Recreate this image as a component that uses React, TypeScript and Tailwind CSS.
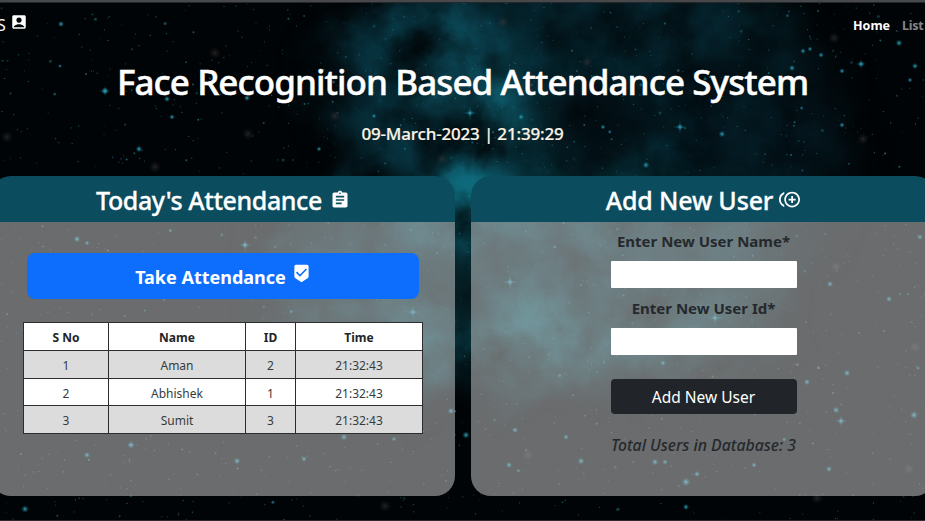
import type { ReactNode } from "react";
import { MdAccountBox, MdAssignment, MdBeenhere, MdControlPointDuplicate } from "react-icons/md";

type Star = { x: number; y: number; r: number; o: number; c: string };

function makeStars(count: number): Star[] {
  let seed = 48271;
  const next = () => {
    seed = (seed * 16807) % 2147483647;
    return seed / 2147483647;
  };
  return Array.from({ length: count }, () => {
    const size = next();
    return {
      x: next() * 925,
      y: next() * 521,
      r: size > 0.97 ? 1.5 : size > 0.8 ? 1 : 0.65,
      o: 0.25 + next() * 0.5,
      c: next() > 0.85 ? "#54717a" : "#26798d",
    };
  });
}

const stars = makeStars(1600);

const brightStars = [
  [61, 24, 2], [60, 66, 1.3], [105, 91, 2.2], [167, 99, 2], [172, 117, 1.8], [139, 149, 2.2], [247, 98, 2],
  [319, 149, 1.6], [374, 116, 1.6], [521, 117, 2], [722, 134, 2.2], [646, 165, 2.2], [603, 127, 1.6],
  [803, 51, 1.8], [810, 49, 1.6], [821, 55, 1.8], [792, 68, 2], [899, 43, 2.2], [842, 71, 1.8], [915, 66, 2],
  [910, 80, 1.6], [842, 125, 1.8], [77, 239, 2.2], [87, 243, 1.6], [25, 509, 2.4], [87, 455, 2], [237, 461, 2.2],
  [304, 459, 1.8], [344, 437, 2.2], [394, 439, 1.6], [451, 411, 2.2], [466, 435, 2.4], [581, 461, 2.2],
  [509, 465, 2], [566, 437, 1.8], [515, 430, 2], [655, 462, 2.2], [665, 462, 1.8], [686, 482, 2.8],
  [697, 474, 2], [754, 465, 1.8], [836, 410, 2.2], [847, 373, 2.2], [807, 382, 2], [829, 469, 2],
  [914, 415, 2.6], [889, 299, 2], [920, 237, 1.8], [830, 284, 2], [686, 507, 2], [663, 363, 1.8],
];

const flares = [
  [470, 113, 9], [680, 127, 9], [105, 91, 7], [715, 318, 11], [510, 282, 11], [413, 312, 9],
  [861, 64, 6], [245, 245, 8], [841, 421, 8], [131, 445, 6],
];

const dust = [
  [215, 53], [7, 137], [248, 134], [335, 116], [503, 22], [442, 159], [863, 139], [834, 38], [155, 167],
  [836, 267], [915, 347], [528, 455], [909, 469], [385, 506], [587, 62], [817, 498],
];

function SpaceBackdrop() {
  return (
    <svg className="absolute inset-0" width="925" height="521" viewBox="0 0 925 521" aria-hidden="true">
      <defs>
        <filter id="cloud" x="-60" y="-80" width="1045" height="681" filterUnits="userSpaceOnUse" colorInterpolationFilters="sRGB">
          <feGaussianBlur in="SourceGraphic" stdDeviation="20" result="soft" />
          <feTurbulence type="fractalNoise" baseFrequency="0.018" numOctaves="5" seed="14" result="noise" />
          <feDisplacementMap in="soft" in2="noise" scale="60" xChannelSelector="R" yChannelSelector="G" result="warped" />
          <feColorMatrix in="noise" type="matrix" values="0 0 0 0 0  0 0 0 0 0  0 0 0 0 0  1.3 0 0.9 0 -0.4" result="mask" />
          <feComposite in="warped" in2="mask" operator="in" />
        </filter>
        <radialGradient id="glow">
          <stop offset="0" stopColor="#3bb4cc" />
          <stop offset="0.4" stopColor="#1f8196" stopOpacity="0.6" />
          <stop offset="1" stopColor="#0e6176" stopOpacity="0" />
        </radialGradient>
        <radialGradient id="dust">
          <stop offset="0" stopColor="#4c4646" stopOpacity="0.45" />
          <stop offset="1" stopColor="#2a2525" stopOpacity="0" />
        </radialGradient>
      </defs>
      <rect width="925" height="521" fill="#010406" />
      <g filter="url(#cloud)">
        <ellipse cx="570" cy="85" rx="250" ry="135" fill="#052630" />
        <ellipse cx="430" cy="50" rx="55" ry="75" fill="#083b48" opacity="0.9" />
        <ellipse cx="462" cy="75" rx="40" ry="60" fill="#0c4b5a" opacity="0.9" />
        <ellipse cx="512" cy="110" rx="28" ry="50" fill="#11687a" opacity="0.9" />
        <ellipse cx="400" cy="145" rx="32" ry="60" fill="#07333f" opacity="0.9" />
        <ellipse cx="765" cy="150" rx="80" ry="100" fill="#041b23" opacity="0.9" />
        <ellipse cx="470" cy="280" rx="200" ry="110" fill="#072e37" />
        <ellipse cx="610" cy="270" rx="180" ry="110" fill="#08323b" opacity="0.9" />
        <ellipse cx="478" cy="205" rx="40" ry="50" fill="#0f7387" />
        <ellipse cx="520" cy="290" rx="110" ry="75" fill="#0b3e48" opacity="0.9" />
        <ellipse cx="530" cy="338" rx="110" ry="28" fill="#106471" opacity="0.8" />
        <ellipse cx="670" cy="330" rx="90" ry="26" fill="#0c464f" opacity="0.8" />
      </g>
      <g filter="url(#cloud)" fill="#010508">
        <ellipse cx="470" cy="285" rx="26" ry="38" />
        <ellipse cx="600" cy="125" rx="60" ry="32" />
      </g>
      {stars.map((s, i) => (
        <circle key={i} cx={s.x} cy={s.y} r={s.r} fill={s.c} opacity={s.o} />
      ))}
      {dust.map(([x, y]) => (
        <circle key={`${x}-${y}`} cx={x} cy={y} r="6" fill="url(#dust)" />
      ))}
      {brightStars.map(([x, y, r]) => (
        <circle key={`${x}-${y}`} cx={x} cy={y} r={r * 1.6} fill="url(#glow)" />
      ))}
      {flares.map(([x, y, r]) => (
        <g key={`${x}-${y}`} fill="url(#glow)">
          <ellipse cx={x} cy={y} rx={r} ry="0.9" />
          <ellipse cx={x} cy={y} rx="0.9" ry={r} />
          <circle cx={x} cy={y} r="3.5" />
        </g>
      ))}
    </svg>
  );
}

function Panel({ title, children }: { title: ReactNode; children: ReactNode }) {
  return (
    <section className="flex h-80 w-[464px] shrink-0 flex-col overflow-hidden rounded-[20px]">
      <h2 className="flex h-[46px] shrink-0 items-center justify-center bg-[#0b4c5f] text-[25px] font-medium text-white">
        {title}
      </h2>
      <div className="flex flex-1 flex-col items-center bg-[#d3d3d3]/50">{children}</div>
    </section>
  );
}

const rows = [
  ["1", "Aman", "2", "21:32:43"],
  ["2", "Abhishek", "1", "21:32:43"],
  ["3", "Sumit", "3", "21:32:43"],
];

function AttendanceTable() {
  return (
    <table className="mt-[23px] w-[399px] table-fixed border-collapse text-center text-[12px] leading-4 text-[#373b3e]">
      <colgroup>
        <col className="w-[85px]" />
        <col className="w-[137px]" />
        <col className="w-[50px]" />
        <col className="w-[127px]" />
      </colgroup>
      <thead>
        <tr className="h-7 bg-white text-[#212529]">
          {["S No", "Name", "ID", "Time"].map((h) => (
            <th key={h} className="border border-[#2d2d2d] pt-[3px] font-bold">{h}</th>
          ))}
        </tr>
      </thead>
      <tbody>
        {rows.map((row) => (
          <tr key={row[0]} className="h-[27.7px] odd:bg-[#dcdcdc] even:bg-white">
            {row.map((cell, i) => (
              <td key={i} className="border border-[#2d2d2d] pt-[3px]">{cell}</td>
            ))}
          </tr>
        ))}
      </tbody>
    </table>
  );
}

export default function App() {
  return (
    <div className="relative h-[521px] w-[925px] overflow-hidden bg-black font-['Noto_Sans','Open_Sans',sans-serif]">
      <SpaceBackdrop />
      <div className="relative flex h-full flex-col">
        <div className="h-[3px] shrink-0 border-b border-[#252628] bg-[#47484b]" />
        <nav className="flex h-[46px] shrink-0 justify-between">
          <div className="-ml-[3px] flex items-start text-white">
            <span className="mt-[11px] text-[16px] leading-[22px]">S</span>
            <MdAccountBox className="ml-[4px] mt-[10px] size-[18px]" />
          </div>
          <div className="flex w-[72px] gap-3 pt-[13px] text-[12.5px] font-bold leading-5">
            <span className="text-white">Home</span>
            <span className="tracking-[-0.3px] text-[#858585]">List</span>
          </div>
        </nav>
        <header className="flex h-[127px] shrink-0 flex-col items-center">
          <h1 className="mt-[9px] whitespace-nowrap text-[35px] font-medium leading-[48px] tracking-[-0.92px] text-white [-webkit-text-stroke:0.5px_white]">
            Face Recognition Based Attendance System
          </h1>
          <p className="mt-4 whitespace-nowrap text-[17px] font-medium leading-6 tracking-[-0.17px] text-[#fbf3e4] [-webkit-text-stroke:0.2px_#fbf3e4]">
            09-March-2023 | 21:39:29
          </p>
        </header>
        <main className="-ml-[9px] flex gap-4">
          <Panel
            title={
              <>
                <span className="pt-[3px] tracking-[-0.4px] [-webkit-text-stroke:0.3px_white]">Today's Attendance</span>
                <MdAssignment className="ml-2 mt-px size-5" />
              </>
            }
          >
            <button className="mt-[31px] flex h-[46px] w-[392px] items-center justify-center rounded-lg bg-[#0d6efd] text-[18px] font-bold text-white">
              <span className="mt-[3px]">Take Attendance</span>
              <MdBeenhere className="mb-[5px] ml-[6px] size-[19px]" />
            </button>
            <AttendanceTable />
          </Panel>
          <Panel
            title={
              <>
                <span className="pt-[3px] tracking-[-0.15px] [-webkit-text-stroke:0.3px_white]">Add New User</span>
                <MdControlPointDuplicate className="ml-[6px] mt-px size-[21px]" />
              </>
            }
          >
            <form className="ml-px flex w-[186px] flex-col items-center whitespace-nowrap text-[#25292d]">
              <label className="mt-[7px] text-[15px] font-bold leading-6">Enter New User Name*</label>
              <input className="mt-2 h-[27px] w-[186px] rounded-[1px] bg-white" />
              <label className="mt-2 text-[15px] font-bold leading-6">Enter New User Id*</label>
              <input className="mt-2 h-[27px] w-[186px] rounded-[1px] bg-white" />
              <button type="button" className="mt-6 h-[35px] w-[186px] rounded-[4px] bg-[#212529] pt-[2px] text-[15.5px] text-white">
                Add New User
              </button>
              <p className="mt-[19px] text-[15.8px] font-medium italic leading-6">Total Users in Database: 3</p>
            </form>
          </Panel>
        </main>
        <div className="mt-auto h-px bg-[#302a32]" />
      </div>
    </div>
  );
}
